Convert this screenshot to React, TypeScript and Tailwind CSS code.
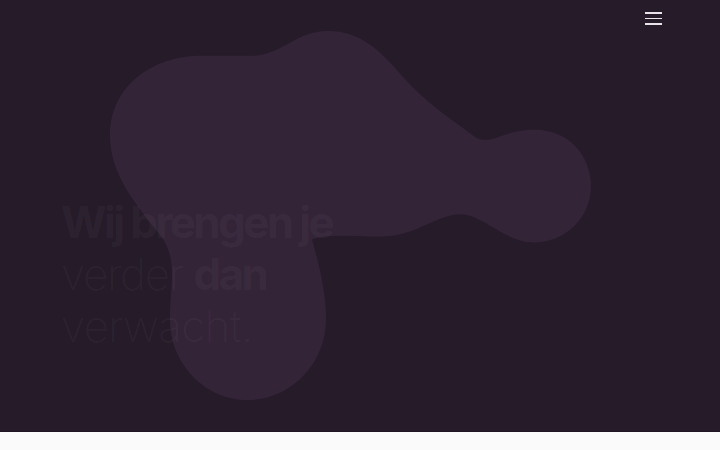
export default function App() {
  return (
    <div className="w-full min-h-screen bg-[#fafafa]" style={{ fontFamily: 'Inter, "Noto Sans", sans-serif' }}>
      <section className="relative h-[432px] overflow-hidden bg-[#261b29] border-b border-[#1e1520]">
        {/* decorative blob */}
        <svg className="absolute inset-0 h-full w-full" viewBox="0 0 720 432" preserveAspectRatio="none">
          <path
            fill="#342438"
            d="M 250 56 C 282 56 295 31 328 31 C 360 31 380 50 402 76 C 424 102 452 120 476 138 C 492 146 502 130 535 130 C 568 130 591 155 591 187 C 591 218 565 243 535 243 C 502 243 482 212 456 215 C 432 218 415 237 380 237 C 350 237 325 234 312 240 C 318 262 326 290 326 320 C 326 365 290 401 248 401 C 205 401 170 365 170 320 C 170 285 178 262 162 238 C 136 205 110 175 110 136 C 110 88 150 56 202 56 C 222 56 236 56 250 56 Z"
          />
        </svg>

        <div className="relative flex h-full flex-col">
          <header className="flex justify-end px-[58px] pt-[12px]">
            <button className="flex w-[17px] flex-col gap-[4px]">
              <span className="h-[1.5px] w-full bg-[#e9e4ea]" />
              <span className="h-[1.5px] w-full bg-[#e9e4ea]" />
              <span className="h-[1.5px] w-full bg-[#e9e4ea]" />
            </button>
          </header>

          <div className="pl-[61px] pt-[171px]">
            <h1 className="text-[44px] leading-[52px] tracking-[-0.06em] text-white/[0.045]">
              <span className="font-bold">Wij brengen je</span>
              <br />
              <span className="font-extralight tracking-[-0.03em]">verder </span>
              <span className="font-bold">dan</span>
              <br />
              <span className="font-extralight tracking-[-0.015em]">verwacht.</span>
            </h1>
          </div>
        </div>
      </section>
      <div className="h-[18px] bg-[#fafafa]" />
    </div>
  );
}
